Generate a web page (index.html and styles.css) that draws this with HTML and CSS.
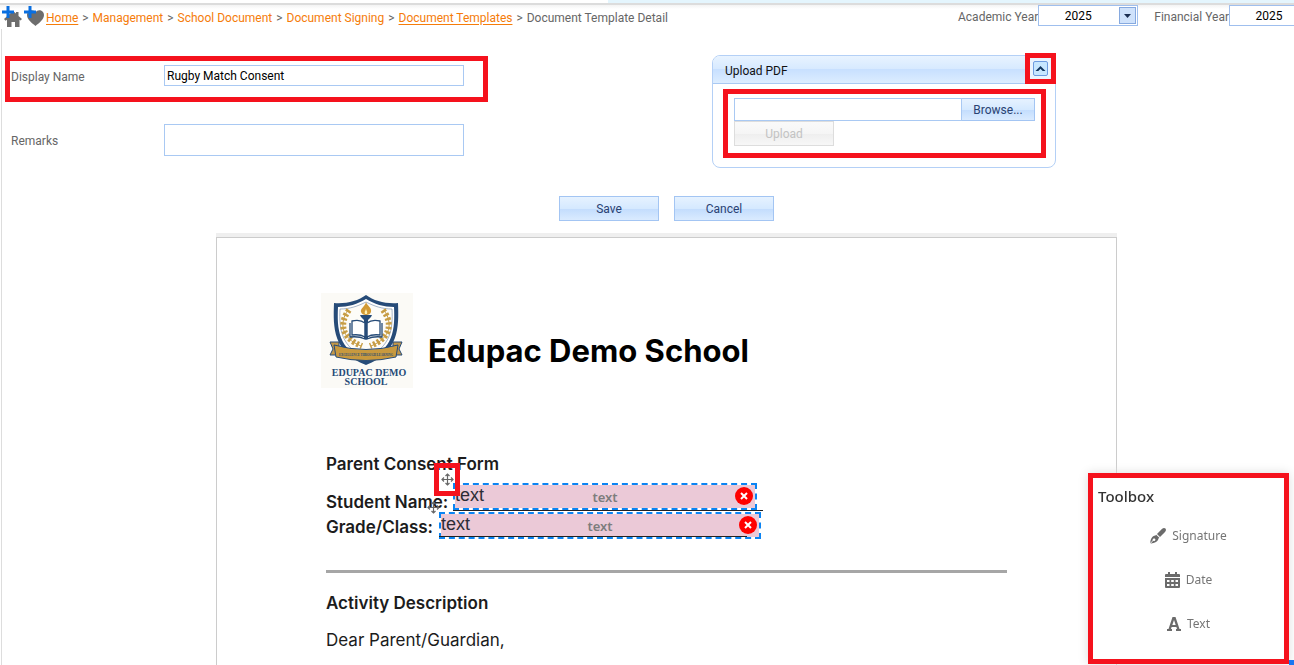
FILE: index.html
```html
<!DOCTYPE html>
<html lang="en">
<head>
<meta charset="utf-8">
<title>Document Template Detail</title>
<link rel="stylesheet" href="styles.css">
</head>
<body>
<svg class="sprite" aria-hidden="true">
  <symbol id="plus" viewBox="0 0 12 12"><path d="M4.500 0h3v4.500H12v3H7.500V12h-3V7.500H0v-3h4.500z" fill="#0a6fe0"/></symbol>
  <symbol id="move" viewBox="0 0 13 13"><path d="M6.500 1v11M1 6.500h11M4.500 3l2-2 2 2M4.500 10l2 2 2-2M3 4.500l-2 2 2 2M10 4.500l2 2-2 2" fill="none" stroke="#666" stroke-width="1.200"/></symbol>
</svg>
<div class="top-strip"></div>
<header class="header">
  <nav class="crumbs" aria-label="Breadcrumb">
    <a href="#" class="shortcut" aria-label="Set as home">
      <svg width="21" height="22" viewBox="0 0 21 22"><path d="M2 13 11 5l3 2.500V6h2.500v4L20 13l-1.500 1.500-1-.8V21h-4.500v-5h-3.500v5H5v-7.300l-1.500 1z" fill="#6d6d6d"/><use href="#plus" width="12" height="12"/></svg>
    </a>
    <a href="#" class="shortcut" aria-label="Add to favourites">
      <svg width="21" height="22" viewBox="0 0 21 22"><path d="M11.500 20C8 17 3 13.500 3 9 3 4.500 9 2.500 11.500 6.500 14 2.500 20 4.500 20 9c0 4.500-5 8-8.500 11z" fill="#6d6d6d"/><use href="#plus" width="12" height="12"/></svg>
    </a>
    <a href="#" class="underlined">Home</a><span>&gt;</span>
    <a href="#">Management</a><span>&gt;</span>
    <a href="#">School Document</a><span>&gt;</span>
    <a href="#">Document Signing</a><span>&gt;</span>
    <a href="#" class="underlined">Document Templates</a><span>&gt;</span>
    <span>Document Template Detail</span>
  </nav>
  <div class="years">
    <label for="academic">Academic Year</label>
    <span class="year-box">
      <select id="academic"><option>2025</option></select>
      <svg class="arrow" width="17" height="17" viewBox="0 0 17 17"><rect x=".5" y=".5" width="16" height="16" fill="#cfe2fb" stroke="#86a9df"/><path d="M5 7h7l-3.500 4z" fill="#1c2f52"/></svg>
    </span>
    <label for="financial" class="second">Financial Year</label>
    <span class="year-box">
      <select id="financial"><option>2025</option></select>
      <svg class="arrow" width="17" height="17" viewBox="0 0 17 17"><rect x=".5" y=".5" width="16" height="16" fill="#cfe2fb" stroke="#86a9df"/><path d="M5 7h7l-3.500 4z" fill="#1c2f52"/></svg>
    </span>
  </div>
</header>
<main>
  <div class="details">
    <div class="fields">
      <div class="field highlight">
        <label for="name">Display Name</label>
        <input id="name" type="text" value="Rugby Match Consent">
      </div>
      <div class="field remarks">
        <label for="remarks">Remarks</label>
        <textarea id="remarks"></textarea>
      </div>
    </div>
    <section class="panel">
      <h2>Upload PDF</h2>
      <div class="collapse highlight">
        <button type="button" aria-label="Collapse"><svg width="15" height="15" viewBox="0 0 15 15"><path d="M2.500 10 7.500 5l5 5H9.700L7.500 7.800 5.300 10z" fill="#12365f"/></svg></button>
      </div>
      <div class="upload highlight">
        <div class="file-row">
          <input type="text" aria-label="PDF file">
          <button type="button" class="btn">Browse...</button>
        </div>
        <button type="button" class="btn wide" disabled>Upload</button>
      </div>
    </section>
  </div>
  <div class="actions">
    <button type="button" class="btn wide">Save</button>
    <button type="button" class="btn wide">Cancel</button>
  </div>
  <div class="viewer">
    <article class="paper">
      <div class="letterhead">
        <svg class="logo" width="92" height="95" viewBox="0 0 92 95" role="img" aria-label="Edupac Demo School crest">
          <rect width="92" height="95" fill="#fbfaf6"/>
          <path d="M45 2C37 8 25 11 13 10c-1 25-1 49 32 62 33-13 33-37 32-62C65 11 53 8 45 2z" fill="#264b78"/>
          <path d="M45 6C37 11 27 14 17 14c-1 22 0 42 28 54 28-12 29-32 28-54-10 0-20-3-28-8z" fill="#fff"/>
          <path d="M45 9C37 13 29 16 19 16c-1 20 1 38 26 49 25-11 27-29 26-49-10 0-18-3-26-7z" fill="#fdfcf8" stroke="#6b84a5" stroke-width=".6"/>
          <g fill="none" stroke="#c79d45">
            <path d="M27 17C18 30 20 45 40 53M63 17c9 13 7 28-13 36" stroke-width="1"/>
            <path d="M28 17C18 30 20 45 41 53M62 17c10 13 8 28-13 36" stroke-width="6" stroke-dasharray="2.500 2"/>
          </g>
          <path d="M45 9c1 4 6 5 5 10q-1 3-5 3t-5-3c-1-4 4-5 5-10z" fill="#d29a35"/>
          <path d="M45 15c0 3 2 3 1 6h-2c-1-3 1-3 1-6z" fill="#fff0b0"/>
          <path d="M39 22h12l-1 2-3 3v19h-4V27l-3-3z" fill="#264b78"/>
          <path d="M31 28q8-2 13 2v14q-5-3-13-2zM59 28q-8-2-13 2v14q5-3 13-2z" fill="#fff" stroke="#264b78" stroke-width="1.300"/>
          <path d="M29 30v14q9-1 15 2h2q6-3 15-2V30" fill="none" stroke="#264b78" stroke-width="1.300"/>
          <path d="M45 25v21" stroke="#264b78" stroke-width="2.500"/>
          <path d="M9 49h9v13H9l3-6zM81 49h-9v13h9l-3-6z" fill="#c29748" stroke="#264b78"/>
          <path d="M13 52q32 9 64 0l-2 12q-30 7-60 0z" fill="#c8993e" stroke="#264b78"/>
          <text x="45" y="63" class="motto">EXCELLENCE THROUGH LEARNING</text>
          <text x="48" y="83" class="crest-name">EDUPAC DEMO</text>
          <text x="45" y="92" class="crest-name">SCHOOL</text>
        </svg>
        <h1>Edupac Demo School</h1>
      </div>
      <h3>Parent Consent Form</h3>
      <p class="line first">Student Name:</p>
      <p class="line">Grade/Class:</p>
      <hr>
      <h3>Activity Description</h3>
      <p class="body-text">Dear Parent/Guardian,</p>

      <div class="rule student-rule"></div>
      <div class="placed student"><span class="value">text</span><span class="kind">text</span>
        <button type="button" aria-label="Remove"><svg width="18" height="18" viewBox="0 0 18 18"><circle cx="9" cy="9" r="9" fill="#f00"/><path d="m6 6 6 6m0-6-6 6" stroke="#fff" stroke-width="2"/></svg></button></div>
      <div class="placed grade"><span class="value">text</span><span class="kind">text</span>
        <button type="button" aria-label="Remove"><svg width="18" height="18" viewBox="0 0 18 18"><circle cx="9" cy="9" r="9" fill="#f00"/><path d="m6 6 6 6m0-6-6 6" stroke="#fff" stroke-width="2"/></svg></button></div>
      <div class="rule grade-rule"></div>
      <svg class="handle grade-handle" width="13" height="13"><use href="#move"/></svg>
      <div class="handle student-handle highlight"><svg width="13" height="13"><use href="#move"/></svg></div>
    </article>
  </div>
</main>
<aside class="toolbox highlight">
  <h2>Toolbox</h2>
  <button type="button"><svg width="16" height="16" viewBox="0 0 16 16"><path d="M15.400.6c-1-1-2.300-.6-3.500.5L7 6l3 3 5-5c1-1 1.300-2.500.4-3.400zM6.200 6.700 9.300 9.800l-.8.800C8 13.500 5 15 .5 15.800l2.700-3c1.800.8 3-1.200 1.500-2.200-1-.6-2.400.3-2 1.600L.2 15.200C.5 11 2 8 5.400 7.500z" fill="#6b6b6b"/></svg>Signature</button>
  <button type="button"><svg width="15" height="16" viewBox="0 0 15 16"><path d="M3 0h2v2h5V0h2v2h2q1 0 1 1v2H0V3q0-1 1-1h2zM0 6h15v9q0 1-1 1H1q-1 0-1-1z" fill="#6b6b6b"/><path d="M2 8h2.500v2H2zm4.200 0h2.600v2H6.200zm4.300 0H13v2h-2.500zM2 12h2.500v2H2zm4.200 0h2.600v2H6.200zm4.300 0H13v2h-2.500z" fill="#fff"/></svg>Date</button>
  <button type="button"><svg width="14" height="14" viewBox="0 0 14 14"><path d="M5.500 0h3l4 12H14v2H9v-2h1L9.400 10H4.600L4 12h1v2H0v-2h1.500zM7 3 5.300 8h3.400z" fill="#6b6b6b"/></svg>Text</button>
</aside>
<div class="corner"></div>
</body>
</html>
```
FILE: styles.css
```css
* { box-sizing: border-box; }
body {
  margin: 0;
  height: 100vh;
  overflow: hidden;
  background: #fff;
  color: #666;
  font: 12px/16px Roboto, "Noto Sans", sans-serif;
}
h1, h2, h3, p { margin: 0; }
button, input, select, textarea { font: inherit; margin: 0; }
button { cursor: pointer; }
.sprite { position: absolute; width: 0; height: 0; }
.highlight { border: 5px solid #f5121d; }

.top-strip {
  height: 5px;
  background: linear-gradient(90deg, #fff 47%, #e4f5fd 47%);
  border-bottom: 2px solid #dcdcdc;
}
.header {
  display: flex;
  justify-content: space-between;
  height: 24px;
  background: linear-gradient(#f3f3f3, #fff 4px);
}
.crumbs { display: flex; align-items: center; gap: 4px; padding: 1px 0 0 2px; white-space: nowrap; }
.crumbs a { color: #f57c0a; text-decoration: none; }
.crumbs .underlined { text-decoration: underline; text-underline-offset: 2px; }
.crumbs .shortcut { display: flex; margin: 0 -3px 2px 0; }
.years { display: flex; align-items: flex-start; white-space: nowrap; margin-right: -35px; }
.years label { padding-top: 4px; }
.years .second { margin-left: 16px; }
.year-box { position: relative; flex: none; }
.year-box select {
  display: block;
  appearance: none;
  width: 100px;
  height: 21px;
  padding: 0 20px 0 0;
  border: 1px solid #9fbfee;
  border-radius: 0;
  background: #fff;
  color: #000;
  text-align: center;
  text-align-last: center;
}
.arrow { position: absolute; right: 2px; top: 2px; pointer-events: none; }

main { padding-left: 5px; border-left: 1px solid #ddd; margin-left: 1px; }
.details { display: flex; justify-content: space-between; padding: 26px 238px 0 0; }
.fields { width: 483px; margin: 1px 0 0 -2px; }
.field { display: flex; align-items: center; }
.field label { width: 153px; padding-top: 2px; }
.field input, .field textarea {
  width: 300px;
  border: 1px solid #a9c9f3;
  background: #fff;
  color: #000;
  padding: 1px 2px 0;
  resize: none;
}
.field.highlight { height: 46px; padding: 0 0 7px 1px; }
.field input { height: 21px; }
.field.remarks { margin-top: 22px; padding-left: 6px; }
.field textarea { height: 32px; }

.panel {
  position: relative;
  width: 344px;
  border: 1px solid #b4d0f6;
  border-radius: 8px;
  padding-bottom: 9px;
}
.panel h2 {
  padding: 7px 12px 4px;
  border-bottom: 1px solid #a9c9f3;
  border-radius: 7px 7px 0 0;
  background: linear-gradient(#e8f3ff, #d6e9ff 50%, #c8e0ff 50%, #dcedff);
  color: #111;
  font-size: 12px;
  font-weight: 400;
}
.collapse { position: absolute; right: -1px; top: -3px; display: flex; padding: 3px; background: #eaf4ff; }
.collapse button { display: flex; padding: 0; border: 1px solid #6d9be0; border-radius: 2px; background: #c6e6ff; width: 15px; height: 15px; align-items: center; justify-content: center; }
.collapse svg { flex: none; }
.upload { margin: 5px 9px 0 10px; height: 69px; padding: 4px 6px; }
.file-row { display: flex; }
.file-row input { flex: 1; min-width: 0; height: 23px; border: 1px solid #a9c9f3; }
.file-row .btn { width: 73px; height: 23px; border-left: 0; }
.btn {
  height: 25px;
  padding: 0;
  border: 1px solid #a3c5f3;
  background: linear-gradient(#e6f2ff, #d5e9ff 50%, #c2dcfd 50%, #daebff);
  color: #2a4272;
}
.btn.wide { width: 100px; display: block; }
.btn:disabled { border-color: #ddd; background: linear-gradient(#fafafa, #f5f5f5 50%, #eee 50%, #f7f7f7); color: #c3c3c3; }
.actions { display: flex; justify-content: center; gap: 15px; padding: 28px 0 12px 32px; }

.viewer { width: 901px; max-width: 100%; margin: 0 auto; position: relative; left: 16px; padding-top: 4px; background: #efefef; }
.paper {
  position: relative;
  border: 1px solid #ccc;
  background: #fff;
  padding: 55px 109px 60px;
  color: #1c1c1c;
  font: 17px/25px Inter, "Noto Sans", sans-serif;
}
.letterhead { display: flex; align-items: center; gap: 15px; margin: 0 0 64px -5px; }
.letterhead h1 { padding-top: 20px; color: #000; font-size: 31px; line-height: 36px; font-weight: 700; white-space: nowrap; }
.logo { display: block; flex: none; }
.logo text { text-anchor: middle; font-family: "Liberation Serif", serif; fill: #264b78; }
.logo .motto { font-size: 3px; font-weight: 700; }
.logo .crest-name { font-size: 10px; font-weight: 700; }
.paper h3 { font-size: 17px; font-weight: 600; }
.line { font-weight: 600; }
.line.first { margin-top: 13px; }
.paper hr { height: 3px; margin: 30px 0 18px; border: 0; background: #a6a6a6; }
.body-text { margin-top: 12px; }

/* Fields dropped on the document canvas */
.placed {
  position: absolute;
  display: flex;
  align-items: center;
  justify-content: center;
  height: 27px;
  border: 2px dashed #0b84f3;
  background: #ebc9d7 padding-box;
}
.student { left: 236px; top: 245px; width: 304px; }
.grade { left: 222px; top: 274px; width: 322px; }
.value { position: absolute; left: 0; top: 0; font: 18px/20px "Liberation Sans", sans-serif; color: #2c2c35; }
.kind { font: 600 13px/18px "Noto Sans", sans-serif; color: #7d7d7d; }
.placed button { position: absolute; right: 2px; top: 2px; display: flex; padding: 0; border: 0; background: none; }
.rule { position: absolute; height: 1px; background: #222; }
.student-rule { left: 236px; top: 272px; width: 310px; }
.grade-rule { left: 222px; top: 298px; width: 308px; }
.handle { position: absolute; }
.grade-handle { left: 210px; top: 263px; }
.student-handle { left: 217px; top: 225px; width: 26px; height: 33px; display: flex; align-items: center; justify-content: center; }

.toolbox {
  position: fixed;
  right: 5px;
  bottom: 1px;
  width: 201px;
  padding: 8px 5px 25px;
  display: flex;
  flex-direction: column;
  align-items: center;
  gap: 24px;
  background: #fff;
  box-shadow: 0 0 10px #ddd;
  font-family: "Noto Sans", sans-serif;
}
.toolbox h2 { align-self: flex-start; margin-bottom: -4px; color: #333; font-size: 15px; line-height: 20px; font-weight: 500; }
.toolbox button { display: flex; align-items: center; gap: 6px; padding: 0; border: 0; background: none; color: #757575; line-height: 20px; }
.corner { position: fixed; right: 0; bottom: 0; width: 5px; height: 5px; background: #1976f2; }
```
